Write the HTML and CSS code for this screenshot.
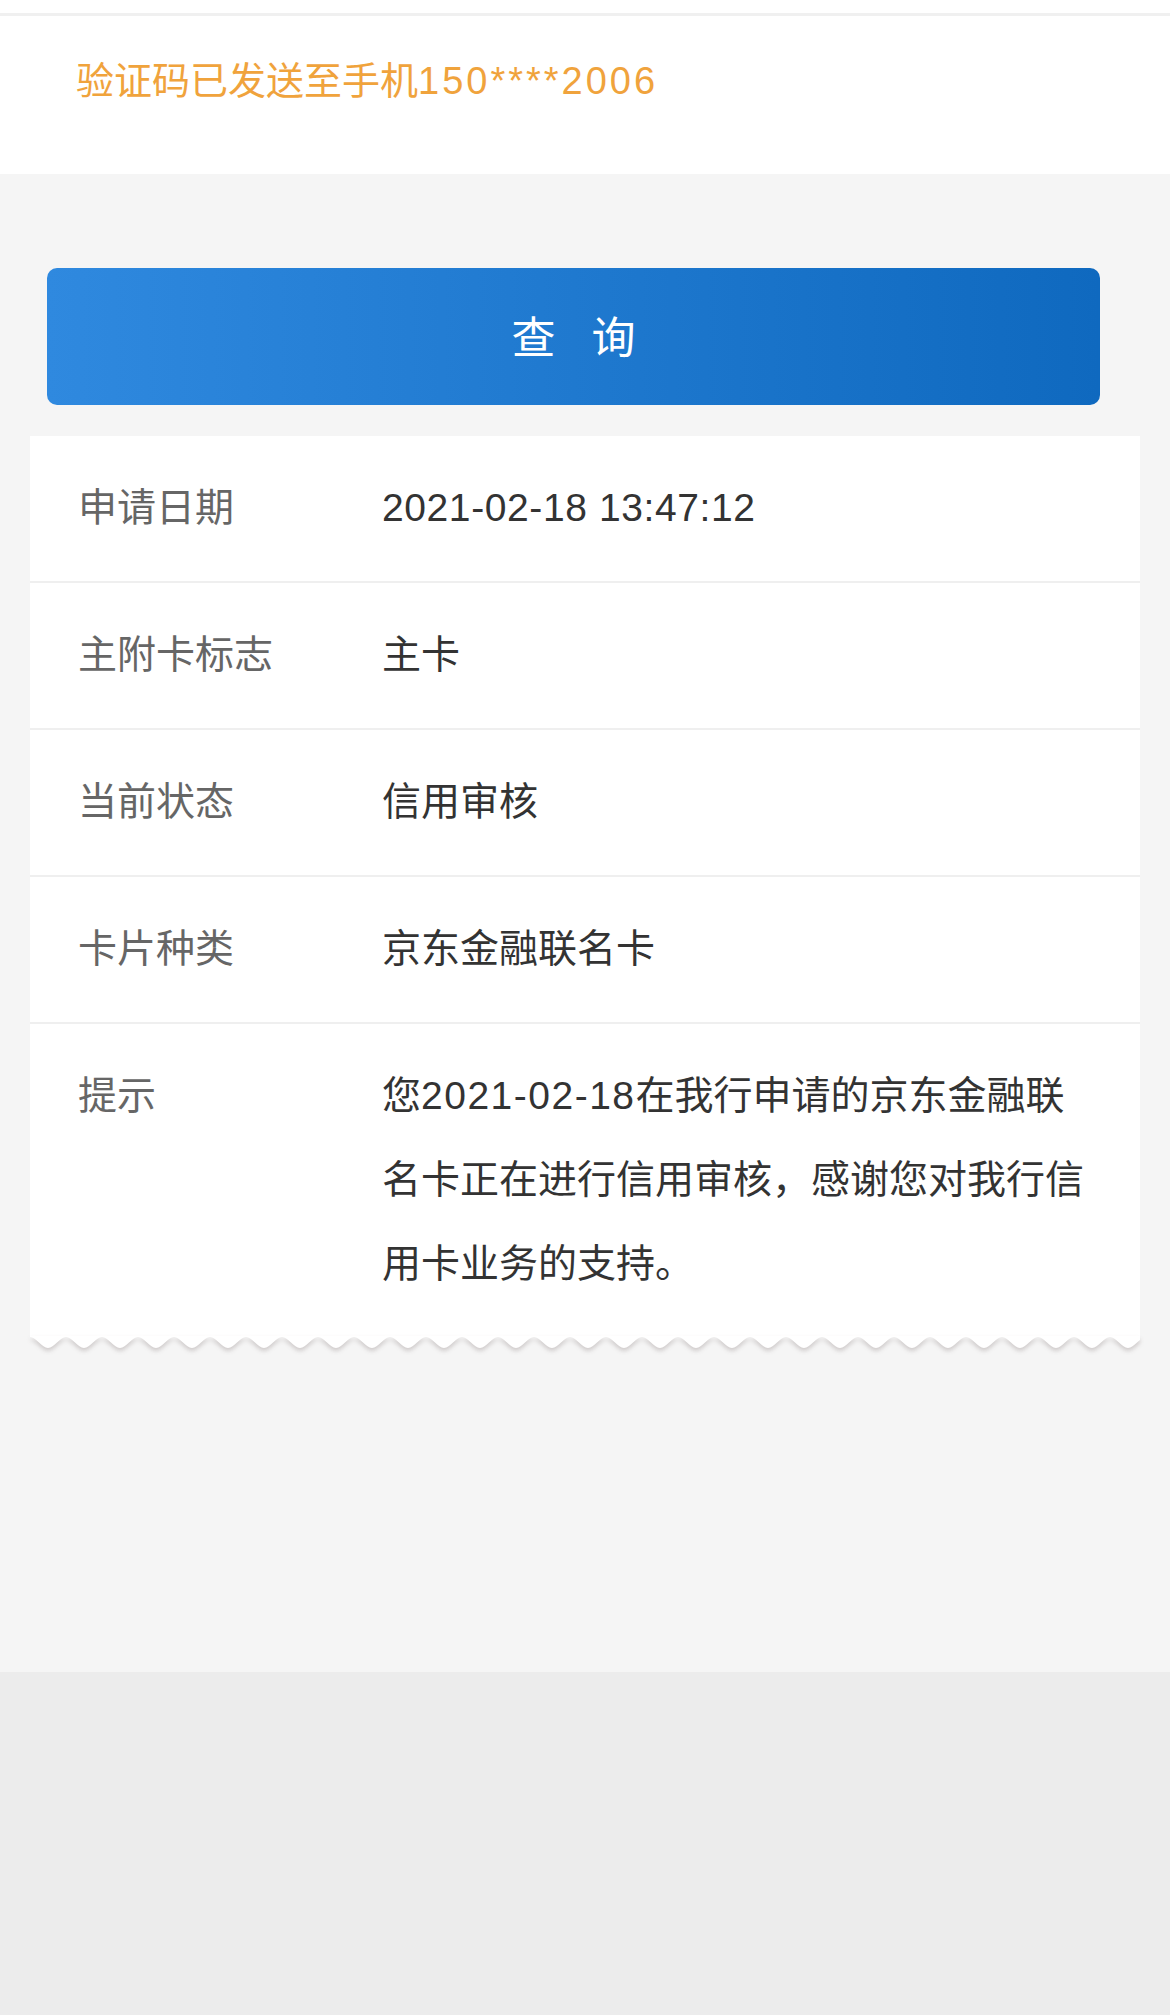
FILE: index.html
```html
<!DOCTYPE html>
<html lang="zh-CN">
<head>
<meta charset="UTF-8">
<meta name="viewport" content="width=device-width, initial-scale=1.0">
<title>申请进度查询</title>
<link rel="stylesheet" href="styles.css">
</head>
<body>
<div class="top-bar"></div>
<div class="notice">验证码已发送至手机<span class="phone">150****2006</span></div>

<div class="main">
    <button type="button" class="query-btn">查询</button>

    <div class="card">
        <div class="row">
            <div class="label">申请日期</div>
            <div class="value date">2021-02-18 13:47:12</div>
        </div>
        <div class="row">
            <div class="label">主附卡标志</div>
            <div class="value">主卡</div>
        </div>
        <div class="row">
            <div class="label">当前状态</div>
            <div class="value">信用审核</div>
        </div>
        <div class="row">
            <div class="label">卡片种类</div>
            <div class="value">京东金融联名卡</div>
        </div>
        <div class="row last">
            <div class="label">提示</div>
            <div class="value">您<span class="num">2021-02-18</span>在我行申请的京东金融联名卡正在进行信用审核，感谢您对我行信用卡业务的支持。</div>
        </div>
        <!-- zigzag receipt edge -->
        <svg class="wave" width="100%" height="13">
            <defs>
                <pattern id="wave" width="36" height="13" patternUnits="userSpaceOnUse">
                    <path d="M0 0H36V1C30 1 24 12 18 12S6 1 0 1Z" fill="#fff"/>
                </pattern>
            </defs>
            <rect width="100%" height="13" fill="url(#wave)"/>
        </svg>
    </div>
</div>
</body>
</html>
```

FILE: styles.css
```css
body {
    font-family: "Liberation Sans", "Noto Sans CJK SC", sans-serif;
    background: #ececec;
    margin: 0;
    padding: 0;
}
.top-bar {
    height: 13px;
    background: #fff;
    border-bottom: 3px solid #f0f0f0;
}
.notice {
    background: #fff;
    color: #f0a33c;
    font-size: 38px;
    line-height: 50px;
    padding: 40px 0 68px 76px;
}
.phone {
    letter-spacing: 3px;
}
.main {
    background: #f5f5f5;
    padding: 94px 0 323px;
}
.query-btn {
    display: block;
    width: 1053px;
    height: 137px;
    margin: 0 0 31px 47px;
    border: none;
    border-radius: 10px;
    background: linear-gradient(90deg, #2f89df, #0f69bf);
    color: #fff;
    font-family: inherit;
    font-size: 44px;
    letter-spacing: 36px;
    padding: 0 0 4px 36px;
    cursor: pointer;
}
.card {
    width: 1110px;
    margin-left: 30px;
}
.row {
    display: flex;
    background: #fff;
    padding: 30px 46px 31px 48px;
    line-height: 84px;
    font-size: 39px;
    border-bottom: 2px solid #efefef;
}
.row.last {
    border-bottom: none;
    padding-bottom: 30px;
}
.label {
    width: 304px;
    flex-shrink: 0;
    color: #666;
}
.value {
    flex: 1;
    color: #333;
}
.date {
    letter-spacing: 0.6px;
}
.num {
    letter-spacing: 1.5px;
}
.wave {
    display: block;
    filter: drop-shadow(0 3px 2px rgba(60, 40, 40, 0.2));
}
```
